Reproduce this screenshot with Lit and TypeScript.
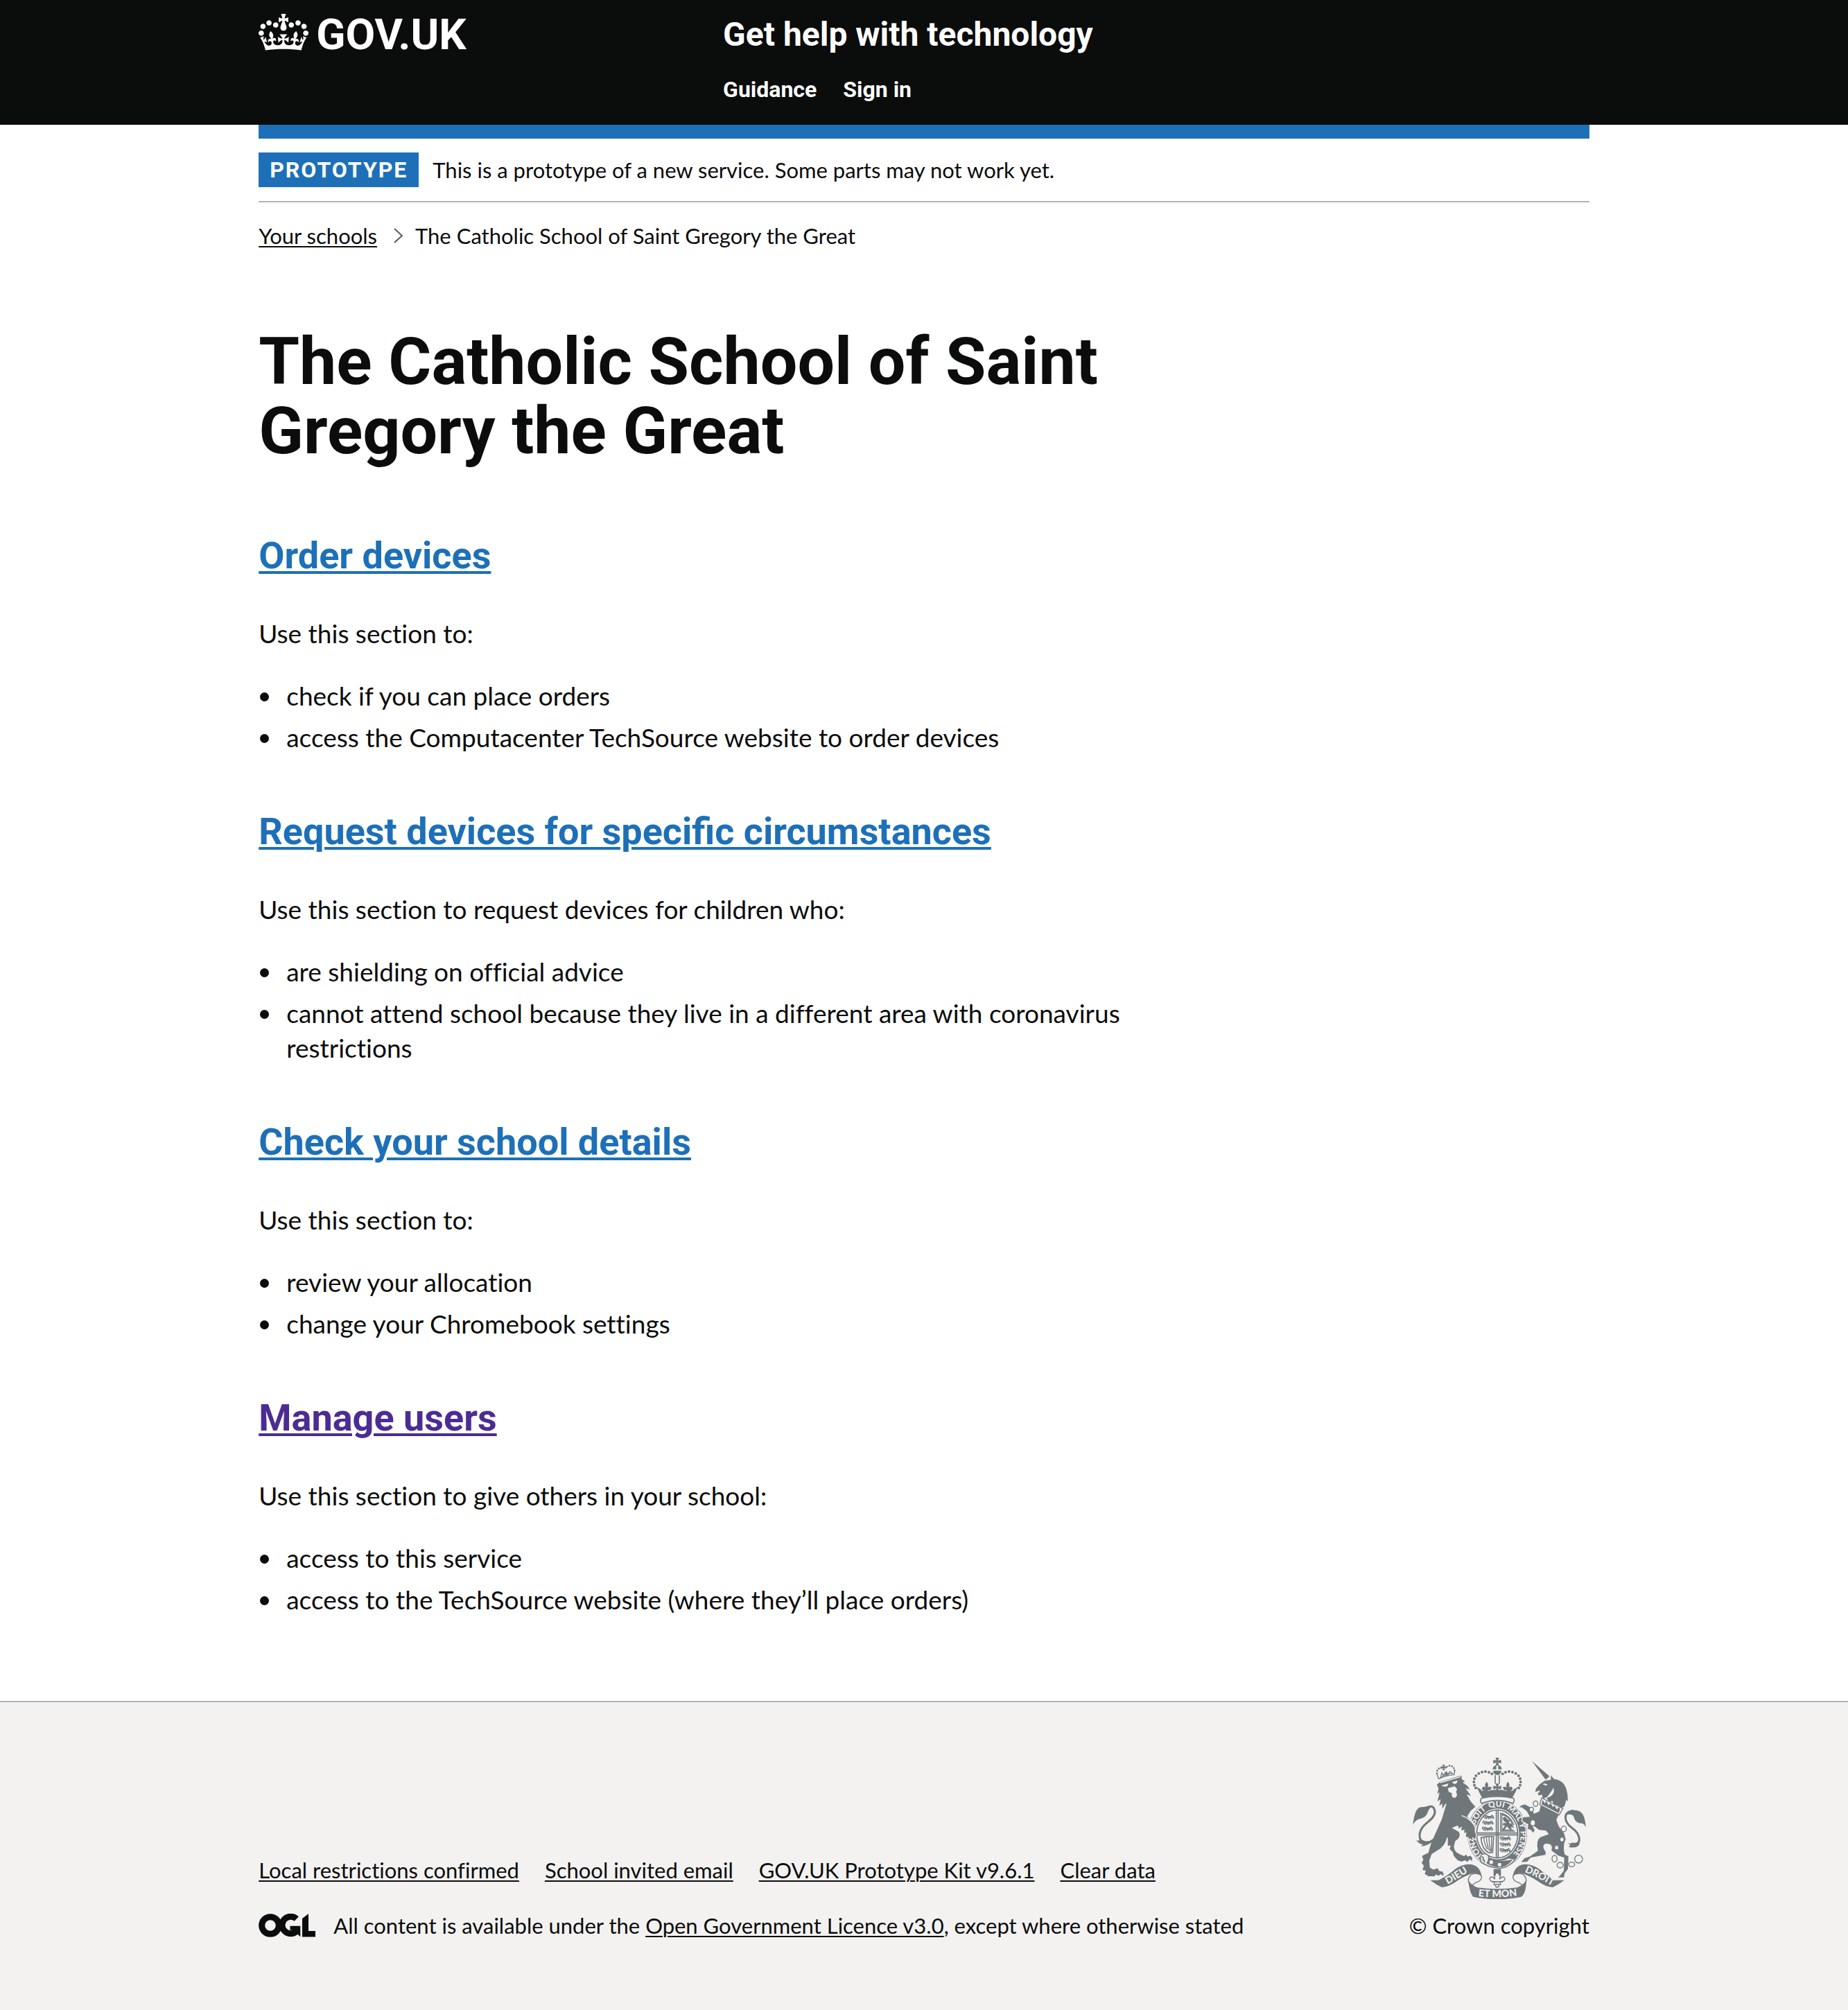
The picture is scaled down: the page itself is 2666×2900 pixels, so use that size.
import { LitElement, html, css, svg } from "lit";
import { customElement } from "lit/decorators.js";
import { classMap } from "lit/directives/class-map.js";

interface Section {
  title: string;
  intro: string;
  items: string[];
  visited?: boolean;
}

const SECTIONS: Section[] = [
  {
    title: "Order devices",
    intro: "Use this section to:",
    items: [
      "check if you can place orders",
      "access the Computacenter TechSource website to order devices",
    ],
  },
  {
    title: "Request devices for specific circumstances",
    intro: "Use this section to request devices for children who:",
    items: [
      "are shielding on official advice",
      "cannot attend school because they live in a different area with coronavirus restrictions",
    ],
  },
  {
    title: "Check your school details",
    intro: "Use this section to:",
    items: ["review your allocation", "change your Chromebook settings"],
  },
  {
    title: "Manage users",
    intro: "Use this section to give others in your school:",
    items: [
      "access to this service",
      "access to the TechSource website (where they’ll place orders)",
    ],
    visited: true,
  },
];

const FOOTER_LINKS = [
  "Local restrictions confirmed",
  "School invited email",
  "GOV.UK Prototype Kit v9.6.1",
  "Clear data",
];

@customElement("crown-logo")
export class CrownLogo extends LitElement {
  static styles = css`
    :host { display: block; }
    .crown { display: block; width: 72px; height: 53px; fill: currentColor; }
  `;
  render() {
    return html`<svg class="crown" viewBox="0 0 132 97" aria-hidden="true"><path fill-rule="evenodd" d="M25 30.2c3.5 1.5 7.7-.2 9.1-3.7 1.5-3.6-.2-7.8-3.9-9.2-3.6-1.4-7.6.3-9.1 3.9-1.4 3.5.3 7.5 3.9 9zM9 39.5c3.6 1.5 7.8-.2 9.2-3.7 1.5-3.6-.2-7.8-3.9-9.1-3.6-1.5-7.6.2-9.1 3.8-1.4 3.5.3 7.5 3.8 9zM4.4 57.2c3.5 1.5 7.7-.2 9.1-3.8 1.5-3.6-.2-7.7-3.9-9.1-3.5-1.5-7.6.3-9.1 3.8-1.4 3.5.3 7.6 3.9 9.1zm38.3-21.4c3.5 1.5 7.7-.2 9.1-3.8 1.5-3.6-.2-7.7-3.9-9.1-3.6-1.5-7.6.3-9.1 3.8-1.3 3.6.4 7.7 3.9 9.1zm64.4-5.6c-3.6 1.5-7.8-.2-9.1-3.7-1.5-3.6.2-7.8 3.8-9.2 3.6-1.4 7.7.3 9.2 3.9 1.3 3.5-.4 7.5-3.9 9zm15.9 9.3c-3.6 1.5-7.7-.2-9.1-3.7-1.5-3.6.2-7.8 3.7-9.1 3.6-1.5 7.7.2 9.2 3.8 1.5 3.5-.3 7.5-3.8 9zm4.7 17.7c-3.6 1.5-7.8-.2-9.2-3.8-1.5-3.6.2-7.7 3.9-9.1 3.6-1.5 7.7.3 9.2 3.8 1.3 3.5-.4 7.6-3.9 9.1zM89.3 35.8c-3.6 1.5-7.8-.2-9.2-3.8-1.4-3.6.2-7.7 3.9-9.1 3.6-1.5 7.7.3 9.2 3.8 1.4 3.6-.3 7.7-3.9 9.1zM69.7 17.7l8.9 4.7V9.3l-8.9 2.8c-.2-.3-.5-.6-.9-.9L72.4 0H59.6l3.5 11.2c-.3.3-.6.5-.9.9l-8.8-2.8v13.1l8.8-4.7c.3.3.6.7.9.9l-5 15.4v.1c-.2.8-.4 1.6-.4 2.4 0 4.1 3.1 7.5 7 8.1h.2c.3 0 .7.1 1 .1.4 0 .7 0 1-.1h.2c4-.6 7.1-4.1 7.1-8.1 0-.8-.1-1.7-.4-2.4V34l-5.1-15.4c.4-.2.7-.6 1-.9zM66 92.8c16.9 0 32.8 1.1 47.1 3.2 4-16.9 8.9-26.7 14-33.5l-9.6-3.4c1 4.9 1.1 7.2 0 10.2-1.5-1.4-3-4.3-4.2-8.7L108.6 76c2.8-2 5-3.2 7.5-3.3-4.4 9.4-10 11.9-13.6 11.2-4.3-.8-6.3-4.6-5.6-7.9 1-4.7 5.7-5.9 8-.5 4.3-8.7-3-11.4-7.6-8.8 7.1-7.2 7.9-13.5 2.1-21.1-8 6.1-8.1 12.3-4.5 20.8-4.7-5.4-12.1-2.5-9.5 6.2 3.4-5.2 7.9-2 7.2 3.1-.6 4.3-6.4 7.8-13.5 7.2-10.3-.9-10.9-8-11.2-13.8 2.5-.5 7.1 1.8 11 7.3L80.2 60c-4.1 4.4-8 5.3-12.3 5.4 1.4-4.4 8-11.6 8-11.6H55.5s6.4 7.2 7.9 11.6c-4.2-.1-8-1-12.3-5.4l1.4 16.4c3.9-5.5 8.5-7.7 10.9-7.3-.3 5.8-.9 12.8-11.1 13.8-7.2.6-12.9-2.9-13.5-7.2-.7-5 3.8-8.3 7.1-3.1 2.7-8.7-4.6-11.6-9.4-6.2 3.7-8.5 3.6-14.7-4.6-20.8-5.8 7.6-5 13.9 2.2 21.1-4.7-2.6-11.9.1-7.7 8.8 2.3-5.5 7.1-4.2 8.1.5.7 3.3-1.3 7.1-5.7 7.9-3.5.7-9-1.8-13.5-11.2 2.5.1 4.7 1.3 7.5 3.3l-4.7-15.4c-1.2 4.4-2.7 7.2-4.3 8.7-1.1-3-.9-5.3 0-10.2l-9.5 3.4c5 6.9 9.9 16.7 14 33.5 14.8-2.1 30.8-3.2 47.7-3.2z"></path></svg>`;
  }
}

@customElement("ogl-logo")
export class OglLogo extends LitElement {
  static styles = css`
    :host { display: block; }
    .ogl { display: block; width: 82px; height: 34px; fill: currentColor; }
    .ring { fill: none; stroke: currentColor; stroke-width: 9; }
  `;
  render() {
    return html`<svg class="ogl" viewBox="0 0 82 34" role="img" aria-label="Open Government Licence">
      <circle class="ring" cx="17" cy="17" r="12.3"></circle>
      <path class="ring" d="M54.8 7.5A12.3 12.3 0 1 0 55.2 25"></path>
      <path d="M45.5 17.8H60.3V33.4L55.6 28.8L50 31L49 23.8H45.5Z"></path>
      <path d="M63 7L72 .3V25H82V33.4H63Z"></path>
    </svg>`;
  }
}

const LEFT_BEADS = [
  [387, 209], [381, 197], [379, 183], [381, 169], [388, 156],
  [400, 146], [414, 140], [429, 138], [444, 141], [457, 148],
];

const patee = (x: number, y: number, s: number) => svg`
  <path transform="translate(${x} ${y}) scale(${s})" d="M-8-17H8L3-4L17-8V8L3 4L8 17H-8L-3 4L-17 8V-8L-3-4Z"></path>`;

const fleur = (x: number, y: number) => svg`
  <path transform="translate(${x} ${y})" d="M0-18C7-9 9-3 4 8C10 0 20 3 19 11C18 17 10 16 11 11C6 11 5 16 5 22H-5C-5 16-6 11-11 11C-10 16-18 17-19 11C-20 3-10 0-4 8C-9-3-7-9 0-18Z"></path>`;

/* A walking lion, three of which fill a quarter of the shield. */
const passant = (x: number, y: number) => svg`
  <path class="thin" transform="translate(${x} ${y})" d="M0 16L5 11L2 6L8 3L14 7L28 6L33 2L38 8L37 18M10 7V15L5 18M17 8L20 16L15 18M28 8L27 18M34 9L42 14M-1 12C-7 8-4 1 1 2M9 11H34M12 9H32"></path>`;

@customElement("royal-arms")
export class RoyalArms extends LitElement {
  static styles = css`
    :host { display: block; color: #6f777b; --paper: #f3f2f1; }
    .arms { display: block; width: 250px; height: 204px; fill: currentColor; }
    .paper { fill: var(--paper); }
    .line { fill: none; stroke: currentColor; stroke-width: 5; }
    .tail { fill: none; stroke: currentColor; stroke-width: 9; stroke-linecap: round; }
    .thin { fill: none; stroke: currentColor; stroke-width: 4; }
    .cut { fill: none; stroke: var(--paper); stroke-width: 4; }
    .edged { stroke: var(--paper); stroke-width: 4; }
    .rim { fill: var(--paper); stroke: currentColor; stroke-width: 4; }
    .motto { fill: var(--paper); font: 900 43px Lato, "Liberation Sans", sans-serif; }
    .garter { fill: var(--paper); font: 900 35px Lato, "Liberation Sans", sans-serif; }
  `;
  render() {
    return html`<svg class="arms" viewBox="114 78 750 612" role="img" aria-label="Royal coat of arms">
      <defs>
        <path id="belt" d="M480 526A101 118 0 0 1 480 290A101 118 0 0 1 480 526"></path>
        <path id="left-scroll" d="M252 634Q315 598 366 564"></path>
        <path id="mid-scroll" d="M384 676Q480 689 580 673"></path>
        <path id="right-scroll" d="M586 568Q650 592 728 640"></path>
      </defs>

      <ellipse cx="480" cy="408" rx="129" ry="148"></ellipse>
      <ellipse class="cut" cx="480" cy="408" rx="125" ry="144"></ellipse>
      <ellipse class="paper" cx="480" cy="408" rx="95" ry="110"></ellipse>
      <ellipse class="line" cx="480" cy="408" rx="89" ry="104"></ellipse>
      <g>
        <path class="line" d="M476 305V511M484 305V511M392 404H568M392 412H568"></path>
        ${passant(425, 325)}${passant(422, 350)}${passant(420, 376)}
        ${passant(497, 418)}${passant(497, 444)}${passant(496, 469)}
        <path class="thin" d="M494 398V316M494 318C520 322 542 342 552 370M556 396H494M500 392V324C520 328 538 345 546 368M550 391H500"></path>
        <path d="M503 338L515 333L522 343L535 350L530 360L544 365L553 382L540 377L543 392L531 386L522 375L510 392L501 389L514 372L503 370L506 361L520 361L508 352Z"></path>
        <path class="line" d="M408 424Q440 416 464 420L460 488Q442 494 432 480Q412 466 410 424"></path>
        <path class="thin" d="M422 424Q424 456 438 474M433 423Q434 456 447 482M444 422Q444 456 453 486M455 422V484"></path>
      </g>
      <text class="garter" text-anchor="middle"><textPath href="#belt" startOffset="98">HON</textPath></text>
      <text class="garter" text-anchor="middle"><textPath href="#belt" startOffset="254">SOIT</textPath></text>
      <text class="garter" text-anchor="middle"><textPath href="#belt" startOffset="341">QUI</textPath></text>
      <text class="garter" text-anchor="middle"><textPath href="#belt" startOffset="424">MAL</textPath></text>
      <text class="garter" text-anchor="middle"><textPath href="#belt" startOffset="482">Y</textPath></text>
      <text class="garter" text-anchor="middle"><textPath href="#belt" startOffset="558">PENSE</textPath></text>

      <path class="rim" d="M408 512C405 495 425 488 440 500L446 514Q490 532 530 512Q555 520 562 512Q530 556 490 557Q440 550 420 536Q404 530 408 512Z"></path>
      <path d="M438 508Q485 534 548 518Q520 554 484 553Q450 546 432 534Q446 520 438 508Z"></path>
      <circle class="paper" cx="454" cy="530" r="8"></circle>
      <circle class="paper" cx="490" cy="541" r="8"></circle>
      <path class="line" d="M412 506Q424 508 418 520Q430 520 422 532"></path>

      <path class="edged" d="M398 212Q400 236 414 252Q402 260 412 277Q480 245 548 277Q558 260 546 252Q560 236 562 212L480 200Z"></path>
      <path class="paper" d="M412 252Q480 236 550 252Q558 262 548 276Q480 248 412 276Q404 262 412 252Z"></path>
      <path class="line" d="M412 253Q480 238 550 253Q557 264 548 276Q480 250 412 276Q404 264 412 253"></path>
      <path class="paper" d="M394 204L404 200L420 222H446L462 200H498L514 222H540L556 200L566 204L560 226Q480 208 401 226Z"></path>
      <path d="M391 204L403 230Q480 216 557 230L569 204L556 212L540 226H420L404 212Z"></path>
      ${LEFT_BEADS.map(([x, y]) => svg`<circle cx=${x} cy=${y} r="6"></circle><circle cx=${960 - x} cy=${y} r="6"></circle>`)}
      ${patee(480, 95, 1)}
      <path d="M460 128Q462 112 476 111V128ZM500 128Q498 112 484 111V128ZM462 134H498Q496 152 480 153Q464 152 462 134Z"></path>
      <path class="line" d="M471 154V190M489 154V190"></path>
      ${patee(480, 207, 1)}${fleur(434, 200)}${fleur(526, 200)}

      <path class="edged" d="M216 194L232 180L300 160L328 152V170L344 180L334 186L352 198L366 220L348 214L372 248L352 240L368 268L388 290L366 310L352 332L366 350L388 372L384 392L390 412L386 434L374 426L376 440L362 430L358 440L354 424L342 422L344 404L334 406L336 392L322 396L324 380L314 388L308 374L288 382L316 398Q328 424 300 440L294 462Q296 486 318 494L336 502L346 494L352 504L366 500L374 512L372 530L362 520L350 532L340 524L326 530L308 524L290 504L286 488L272 474L276 460L264 462V424Q258 452 236 472L198 496L188 522L190 552L204 560L222 554L232 568L244 568L250 580L246 594L236 584L226 592L216 586L208 594L180 592L164 582L168 568L154 566L160 546L150 534L158 520L152 504L160 498L180 488L192 448L212 402L238 344L258 278L240 306V280L226 292L232 262L218 272L228 230L216 244L224 212Z"></path>
      <path class="paper" d="M238 198L268 190L264 202Q248 206 238 198ZM284 184L308 176Q308 190 294 192ZM266 210L296 202L306 214L302 226Q312 248 294 252Q280 250 284 232L270 226Z"></path>
      <path class="cut" d="M326 328Q372 344 388 388M232 186L322 160"></path>
      <path class="thin" d="M226 170L220 150M294 152L296 132M226 170Q260 154 294 152M232 164Q260 148 290 146M236 158L240 144L246 154L258 140L266 150L276 138L284 146"></path>
      <g>
        <circle cx="219" cy="146" r="4"></circle><circle cx="220" cy="134" r="4"></circle><circle cx="227" cy="125" r="4"></circle><circle cx="237" cy="122" r="4"></circle>
        <circle cx="262" cy="117" r="4"></circle><circle cx="273" cy="113" r="4"></circle><circle cx="284" cy="115" r="4"></circle><circle cx="292" cy="123" r="4"></circle><circle cx="295" cy="133" r="4"></circle>
        ${patee(248, 120, 0.7)}${patee(261, 148, 0.5)}
      </g>
      <path class="tail" d="M202 434C180 454 140 448 144 408C150 360 212 350 210 310C206 284 184 284 176 298"></path>
      <path d="M202 286C180 284 172 292 148 292C124 300 122 330 114 368Q126 348 140 344Q172 340 180 312Q184 298 202 286ZM144 420Q152 444 190 438L204 432Q190 458 150 462L158 454Q138 450 130 434L142 438Z"></path>

      <path d="M630 92L706 158L690 174Z"></path>
      <path class="edged" d="M710 148L726 168Q758 172 772 194L780 210L786 236L788 272L780 264L772 290L758 298L740 284L728 290L718 268L704 272L690 252L676 262L672 240L658 244L654 234L642 228L646 210L664 190L684 176L710 172Z"></path>
      <path class="paper" d="M676 192Q690 186 698 196Q690 202 676 192ZM724 208Q732 244 690 254Q706 238 724 208ZM642 228L662 220L664 226L650 236Z"></path>
      <path class="edged" d="M668 280L750 322L738 346Q746 380 770 402L778 430Q764 464 774 496L790 504L788 560L774 578L770 598H740L756 580L766 566L768 512L744 504L712 480Q722 450 690 452Q672 458 692 486L690 500L626 512L610 530L580 532L596 512L620 504L654 480Q644 436 666 420L700 408L690 396L660 392L634 372L644 392L636 406L624 392L610 388L612 368L586 352L590 334L618 332L606 310L584 294L572 298L580 284L600 278L622 290L640 318L660 310Z"></path>
      <path class="rim" d="M672 252L764 298L748 326L664 282Z"></path>
      <path d="M676 260L686 276L692 264L702 284L710 274L722 292L728 284L738 302L746 292L752 300L746 318L672 280Z"></path>
      <path class="tail" d="M804 450C850 460 840 406 806 384C766 356 764 312 806 308"></path>
      <path d="M776 326C786 300 812 302 836 310C858 322 860 350 864 380Q854 358 840 362Q818 360 812 336Q806 318 776 326ZM838 446Q830 474 788 464L796 460L788 446L806 454Q826 452 838 446Z"></path>
      <g class="rim">
        <ellipse cx="646" cy="277" rx="10" ry="12"></ellipse><ellipse cx="628" cy="302" rx="9" ry="10"></ellipse>
        <ellipse cx="634" cy="360" rx="11" ry="13"></ellipse><ellipse cx="768" cy="386" rx="11" ry="12"></ellipse>
        <ellipse cx="760" cy="432" rx="9" ry="10"></ellipse><ellipse cx="737" cy="467" rx="9" ry="10"></ellipse>
        <ellipse cx="728" cy="515" rx="11" ry="14"></ellipse><ellipse cx="752" cy="543" rx="13" ry="12"></ellipse>
        <ellipse cx="802" cy="540" rx="13" ry="10"></ellipse><circle cx="832" cy="517" r="17"></circle>
      </g>

      <path d="M464 560H496V590H464Z"></path>
      <path class="rim" d="M480 574Q496 588 490 604Q504 586 513 600Q512 616 494 614Q490 626 496 628H464Q470 626 466 614Q448 616 447 600Q456 586 470 604Q464 588 480 574Z"></path>
      <circle class="rim" cx="480" cy="632" r="7"></circle>
      <path class="line" d="M456 615H504"></path>

      <path class="rim" d="M412 590Q414 612 388 618L370 630Q350 622 356 600Q366 576 390 580Q402 578 412 590Z"></path>
      <path class="rim" d="M548 590Q546 612 572 618L590 630Q610 622 604 600Q594 576 570 580Q558 578 548 590Z"></path>
      <path d="M190 608H226Q270 586 296 562Q330 536 368 540Q404 546 412 588Q388 570 362 582Q320 600 300 616Q268 638 240 639Q216 628 190 608Z"></path>
      <path d="M770 608H734Q690 586 664 562Q630 536 592 540Q556 546 548 588Q572 570 598 582Q640 600 660 616Q692 638 720 639Q744 628 770 608Z"></path>
      <path d="M354 602Q360 626 394 640Q480 652 566 640Q600 626 606 602Q606 664 584 680Q540 690 480 690Q420 690 376 680Q360 664 354 602Z"></path>
      <text class="motto" text-anchor="middle"><textPath href="#left-scroll" startOffset="50%">DIEU</textPath></text>
      <text class="motto" text-anchor="middle"><textPath href="#mid-scroll" startOffset="50%">ET MON</textPath></text>
      <text class="motto" text-anchor="middle"><textPath href="#right-scroll" startOffset="50%">DROIT</textPath></text>
    </svg>`;
  }
}

@customElement("app-root")
export class AppRoot extends LitElement {
  static styles = css`
    :host {
      display: flex;
      flex-direction: column;
      min-height: 100vh;
      background: #fff;
      color: #0b0c0c;
      font-family: Lato, "Liberation Sans", sans-serif;
      font-size: 37px;
      line-height: 50px;
      font-variant-ligatures: no-common-ligatures;
    }
    a { color: inherit; text-decoration-thickness: 2px; text-underline-offset: 3px; }
    h1, h2, p, ul, ol { margin: 0; padding: 0; list-style: none; }
    .wrap { width: 72%; max-width: 1920px; margin: 0 auto; }

    .header { background: #0b0c0c; color: #fff; font-family: Roboto, "Liberation Sans", sans-serif; font-weight: 700; }
    .header a { text-decoration: none; }
    .header-row { display: flex; align-items: flex-start; padding: 20px 0 31px; }
    .brand { flex: 0 0 calc(100% / 3 + 30px); }
    .brand-link { display: inline-flex; align-items: flex-start; gap: 11px; font-size: 62px; line-height: 60px; }
    .service { padding-top: 5px; font-size: 48px; }
    .nav { display: flex; gap: 38px; margin-top: 34px; font-size: 32px; line-height: 40px; }
    .bar { height: 20px; background: #1d70b8; }

    .small { font-size: 31px; line-height: 40px; }
    .phase { display: flex; align-items: center; gap: 20px; padding: 20px 0; border-bottom: 2px solid #b1b4b6; }
    .tag { padding: 0 16px; background: #1d70b8; color: #fff; font: 700 32px/50px Roboto, "Liberation Sans", sans-serif; letter-spacing: 2px; }
    .crumbs { display: flex; align-items: center; padding-top: 28px; }
    .chevron { width: 14px; height: 22px; margin: 0 17px 0 24px; fill: none; stroke: #505a5f; stroke-width: 2; }

    .main { display: flex; flex-direction: column; gap: 80px; padding: 112px 0 120px; }
    .title, .section { max-width: 1260px; }
    .title { margin-bottom: 20px; font: 700 95px/100px Roboto, "Liberation Sans", sans-serif; }
    .heading { margin-bottom: 57px; font: 700 54px/60px Roboto, "Liberation Sans", sans-serif; }
    .heading-link { color: #1d70b8; text-decoration-thickness: 4px; text-underline-offset: 4px; }
    .heading-link.visited { color: #4c2c92; }
    .list { display: flex; flex-direction: column; gap: 10px; margin-top: 40px; }
    .section { padding-bottom: 1px; }
    .item { display: flex; gap: 25px; }
    .item::before { content: ""; flex: none; width: 13px; height: 13px; margin: 20px 0 0 2px; border-radius: 50%; background: currentColor; }

    .footer { flex: 1; border-top: 2px solid #b1b4b6; background: #f3f2f1; }
    .footer-row { display: flex; align-items: flex-end; justify-content: space-between; padding: 80px 0; }
    .links { display: flex; flex-wrap: wrap; gap: 37px; margin-bottom: 40px; }
    .licence { display: flex; align-items: center; gap: 26px; }
    .copyright { display: flex; flex-direction: column; align-items: center; gap: 18px; text-decoration: none; }
  `;

  render() {
    return html`
      <header class="header">
        <div class="wrap header-row">
          <div class="brand">
            <a class="brand-link" href="#"><crown-logo></crown-logo><span>GOV.UK</span></a>
          </div>
          <div>
            <div class="service"><a href="#">Get help with technology</a></div>
            <nav class="nav" aria-label="Service">
              <a href="#">Guidance</a><a href="#">Sign in</a>
            </nav>
          </div>
        </div>
      </header>
      <div class="wrap">
        <div class="bar"></div>
        <div class="phase small">
          <strong class="tag">PROTOTYPE</strong>
          <span>This is a prototype of a new service. Some parts may not work yet.</span>
        </div>
        <nav aria-label="Breadcrumb">
          <ol class="crumbs small">
            <li><a href="#">Your schools</a></li>
            <svg class="chevron" viewBox="0 0 14 22" aria-hidden="true"><path d="M1 1L12 11L1 21"></path></svg>
            <li>The Catholic School of Saint Gregory the Great</li>
          </ol>
        </nav>
        <main class="main">
          <h1 class="title">The Catholic School of Saint Gregory the Great</h1>
          ${SECTIONS.map((s) => html`
            <section class="section">
              <h2 class="heading">
                <a href="#" class=${classMap({ "heading-link": true, visited: !!s.visited })}>${s.title}</a>
              </h2>
              <p>${s.intro}</p>
              <ul class="list">${s.items.map((i) => html`<li class="item"><span>${i}</span></li>`)}</ul>
            </section>`)}
        </main>
      </div>
      <footer class="footer">
        <div class="wrap footer-row small">
          <div>
            <ul class="links">${FOOTER_LINKS.map((l) => html`<li><a href="#">${l}</a></li>`)}</ul>
            <div class="licence">
              <ogl-logo></ogl-logo>
              <span>All content is available under the <a href="#">Open Government Licence v3.0</a>, except where otherwise stated</span>
            </div>
          </div>
          <a class="copyright" href="#"><royal-arms></royal-arms><span>© Crown copyright</span></a>
        </div>
      </footer>
    `;
  }
}
